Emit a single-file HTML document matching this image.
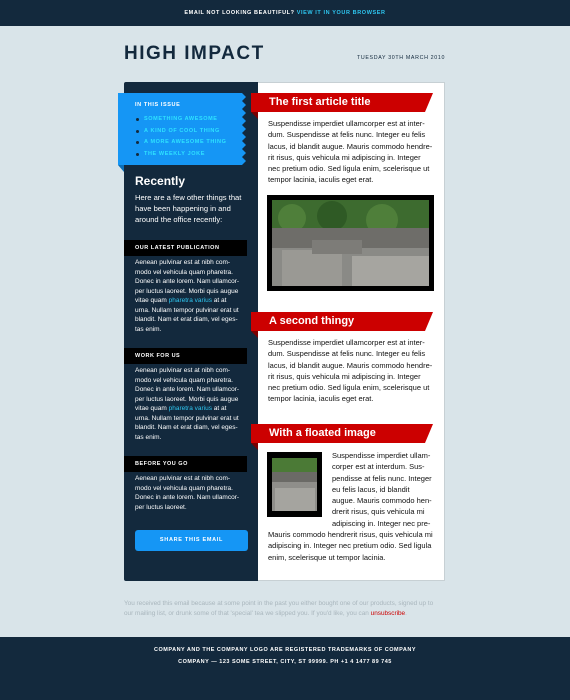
<!DOCTYPE html>
<html><head><meta charset="utf-8"><style>
*{margin:0;padding:0;box-sizing:border-box}
body{width:570px;height:700px;background:#d9e4e9;font-family:"Liberation Sans",sans-serif;position:relative;overflow:hidden}
.abs{position:absolute}
.top{left:0;top:0;width:570px;height:26px;background:#13293d;color:#fff;font-size:5.5px;font-weight:bold;letter-spacing:.6px;text-align:center;line-height:27px}
.top span{color:#2ec6f0}
h1{left:124px;top:43px;font-size:19px;letter-spacing:1.5px;color:#13293d;font-weight:bold}
.date{left:357px;top:55px;font-size:5.3px;letter-spacing:.65px;color:#13293d}
.side{left:124px;top:82px;width:135px;height:499px;background:#13293d;border-radius:2px 0 0 2px}
.main{left:258px;top:82px;width:187px;height:499px;background:#fff;border:1px solid #c7d0d4;border-left:none}
.tab{left:118px;top:93px;width:122px;height:72px;background:#1596f5}
.tabfold{left:118px;top:165px;width:0;height:0;border-top:7px solid #0c6fb8;border-left:6px solid transparent}
.tab h4{position:absolute;left:17px;top:9px;font-size:5.5px;color:#fff;letter-spacing:.6px}
.tab ul{position:absolute;left:26px;top:21px;font-size:5.5px;color:#2ee2ff;font-weight:bold;letter-spacing:.6px;line-height:11.5px;list-style:none}
.tab li:before{content:"";position:absolute;left:-8px;margin-top:4px;width:3px;height:3px;background:#13293d;border-radius:50%}
.rec{left:135px;top:174px;color:#fff;font-size:12px;font-weight:bold}
.intro{left:135px;top:192px;width:118px;color:#fff;font-size:7.6px;line-height:11px}
.bar{left:124px;width:123px;height:16px;background:#000;color:#fff;font-size:5.5px;font-weight:bold;letter-spacing:.5px;padding-left:11px;line-height:16px}
.st{left:135px;width:120px;color:#fff;font-size:6.5px;line-height:9.5px;white-space:nowrap}
.st a{color:#2ec6f0}
.btn{left:135px;top:530px;width:113px;height:21px;background:#1596f5;border-radius:3px;color:#fff;font-size:5.5px;font-weight:bold;letter-spacing:.7px;text-align:center;line-height:21px}
.rt{left:251px;height:19px;width:182px;color:#fff;font-size:11px;font-weight:bold;padding-left:18px;line-height:19px}
.rt svg{position:absolute;left:0;top:0;z-index:-1}
.fold{left:251px;width:0;height:0;border-top:7px solid #7a0000;border-left:7px solid transparent}
.p{left:268px;width:180px;font-size:7.5px;line-height:11.3px;color:#111;white-space:nowrap}
.img{background:#000}
.foot{left:124px;top:599px;width:320px;font-size:6.4px;line-height:10px;color:#a9b6bd}
.foot span{color:#c00}
.bot{left:0;top:637px;width:570px;height:63px;background:#13293d;color:#fff;font-size:5.5px;font-weight:bold;letter-spacing:.5px;text-align:center;line-height:11.5px;padding-top:8px}
</style></head><body>
<div class="abs top">EMAIL NOT LOOKING BEAUTIFUL? <span>VIEW IT IN YOUR BROWSER</span></div>
<h1 class="abs">HIGH IMPACT</h1>
<div class="abs date">TUESDAY 30TH MARCH 2010</div>
<div class="abs side"></div>
<div class="abs main"></div>
<div class="abs tab">
<svg class="abs" style="left:122px;top:0" width="7" height="72"><path d="M0 0H2L6 4L2 8L6 12L2 16L6 20L2 24L6 28L2 32L6 36L2 40L6 44L2 48L6 52L2 56L6 60L2 64L6 68L2 72H0Z" fill="#1596f5"/></svg>
<h4>IN THIS ISSUE</h4>
<ul><li>SOMETHING AWESOME</li><li>A KIND OF COOL THING</li><li>A MORE AWESOME THING</li><li>THE WEEKLY JOKE</li></ul>
</div>
<div class="abs tabfold"></div>
<div class="abs rec">Recently</div>
<div class="abs intro">Here are a few other things that have been happening in and around the office recently:</div>
<div class="abs bar" style="top:240px">OUR LATEST PUBLICATION</div>
<div class="abs st" style="top:258px">Aenean pulvinar est at nibh com-<br>modo vel vehicula quam pharetra.<br>Donec in ante lorem. Nam ullamcor-<br>per luctus laoreet. Morbi quis augue<br>vitae quam <a>pharetra varius</a> at at<br>urna. Nullam tempor pulvinar erat ut<br>blandit. Nam et erat diam, vel eges-<br>tas enim.</div>
<div class="abs bar" style="top:348px">WORK FOR US</div>
<div class="abs st" style="top:366px">Aenean pulvinar est at nibh com-<br>modo vel vehicula quam pharetra.<br>Donec in ante lorem. Nam ullamcor-<br>per luctus laoreet. Morbi quis augue<br>vitae quam <a>pharetra varius</a> at at<br>urna. Nullam tempor pulvinar erat ut<br>blandit. Nam et erat diam, vel eges-<br>tas enim.</div>
<div class="abs bar" style="top:456px">BEFORE YOU GO</div>
<div class="abs st" style="top:474px">Aenean pulvinar est at nibh com-<br>modo vel vehicula quam pharetra.<br>Donec in ante lorem. Nam ullamcor-<br>per luctus laoreet.</div>
<div class="abs btn">SHARE THIS EMAIL</div>

<div class="abs rt" style="top:93px;z-index:1"><svg width="182" height="19"><path d="M0 0H182L174 19H0Z" fill="#cc0000"/></svg>The first article title</div>
<div class="abs fold" style="top:112px"></div>
<div class="abs p" style="top:118px">Suspendisse imperdiet ullamcorper est at inter-<br>dum. Suspendisse at felis nunc. Integer eu felis<br>lacus, id blandit augue. Mauris commodo hendre-<br>rit risus, quis vehicula mi adipiscing in. Integer<br>nec pretium odio. Sed ligula enim, scelerisque ut<br>tempor lacinia, iaculis eget erat.</div>
<div class="abs img" style="left:267px;top:195px;width:167px;height:96px;padding:5px">
<svg width="157" height="86"><rect width="157" height="86" fill="#8a8a86"/><rect width="157" height="30" fill="#3d6b2f"/><circle cx="20" cy="18" r="14" fill="#4f7f3a"/><circle cx="60" cy="16" r="15" fill="#2f5a25"/><circle cx="110" cy="20" r="16" fill="#4f7f3a"/><rect x="0" y="28" width="157" height="20" fill="#6e6d69"/><rect x="10" y="50" width="60" height="36" fill="#9a9994"/><rect x="80" y="56" width="77" height="30" fill="#a6a5a0"/><rect x="40" y="40" width="50" height="14" fill="#7d7c78"/></svg></div>

<div class="abs rt" style="top:312px;z-index:1"><svg width="182" height="19"><path d="M0 0H182L174 19H0Z" fill="#cc0000"/></svg>A second thingy</div>
<div class="abs fold" style="top:331px"></div>
<div class="abs p" style="top:337px">Suspendisse imperdiet ullamcorper est at inter-<br>dum. Suspendisse at felis nunc. Integer eu felis<br>lacus, id blandit augue. Mauris commodo hendre-<br>rit risus, quis vehicula mi adipiscing in. Integer<br>nec pretium odio. Sed ligula enim, scelerisque ut<br>tempor lacinia, iaculis eget erat.</div>

<div class="abs rt" style="top:424px;z-index:1"><svg width="182" height="19"><path d="M0 0H182L174 19H0Z" fill="#cc0000"/></svg>With a floated image</div>
<div class="abs fold" style="top:443px"></div>
<div class="abs img" style="left:267px;top:452px;width:55px;height:65px;padding:6px 5px">
<svg width="45" height="53"><rect width="45" height="53" fill="#8f8e8a"/><rect width="45" height="14" fill="#4b7a36"/><rect y="14" width="45" height="10" fill="#6b6a66"/><rect x="3" y="30" width="40" height="23" fill="#a5a49f"/></svg></div>
<div class="abs p" style="top:450px;left:332px;width:110px">Suspendisse imperdiet ullam-<br>corper est at interdum. Sus-<br>pendisse at felis nunc. Integer<br>eu felis lacus, id blandit<br>augue. Mauris commodo hen-<br>drerit risus, quis vehicula mi<br>adipiscing in. Integer nec pre-</div>
<div class="abs p" style="top:529px">Mauris commodo hendrerit risus, quis vehicula mi<br>adipiscing in. Integer nec pretium odio. Sed ligula<br>enim, scelerisque ut tempor lacinia.</div>

<div class="abs foot">You received this email because at some point in the past you either bought one of our products, signed up to our mailing list, or drunk some of that 'special' tea we slipped you. If you'd like, you can <span>unsubscribe</span>.</div>
<div class="abs bot">COMPANY AND THE COMPANY LOGO ARE REGISTERED TRADEMARKS OF COMPANY<br>COMPANY — 123 SOME STREET, CITY, ST 99999. PH +1 4 1477 89 745</div>
</body></html>
